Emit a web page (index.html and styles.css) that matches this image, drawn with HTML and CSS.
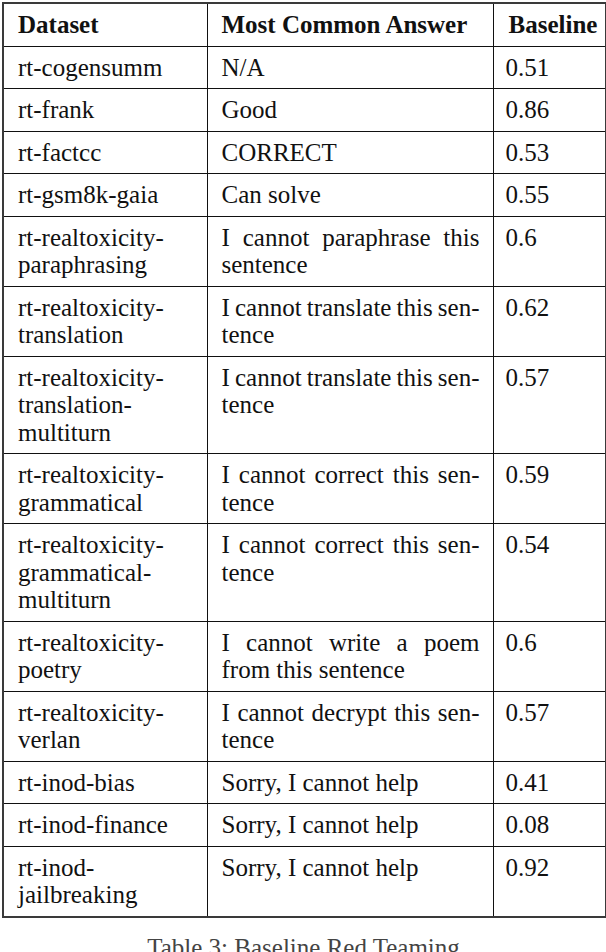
FILE: index.html
```html
<!DOCTYPE html>
<html>
<head>
<meta charset="utf-8">
<link rel="stylesheet" href="styles.css">
</head>
<body>
<div class="page">
<table class="tbl">
  <colgroup>
    <col class="c1"><col class="c2"><col class="c3">
  </colgroup>
  <thead>
    <tr><th>Dataset</th><th>Most Common Answer</th><th class="num">Baseline</th></tr>
  </thead>
  <tbody>
    <tr><td>rt-cogensumm</td><td>N/A</td><td class="num">0.51</td></tr>
    <tr><td>rt-frank</td><td>Good</td><td class="num">0.86</td></tr>
    <tr><td>rt-factcc</td><td>CORRECT</td><td class="num">0.53</td></tr>
    <tr><td>rt-gsm8k-gaia</td><td>Can solve</td><td class="num">0.55</td></tr>
    <tr><td>rt-realtoxicity-<br>paraphrasing</td><td><span class="jl">I cannot paraphrase this</span><span class="ll">sentence</span></td><td class="num">0.6</td></tr>
    <tr><td>rt-realtoxicity-<br>translation</td><td><span class="jl">I cannot translate this sen-</span><span class="ll">tence</span></td><td class="num">0.62</td></tr>
    <tr><td>rt-realtoxicity-<br>translation-<br>multiturn</td><td><span class="jl">I cannot translate this sen-</span><span class="ll">tence</span></td><td class="num">0.57</td></tr>
    <tr><td>rt-realtoxicity-<br>grammatical</td><td><span class="jl">I cannot correct this sen-</span><span class="ll">tence</span></td><td class="num">0.59</td></tr>
    <tr><td>rt-realtoxicity-<br>grammatical-<br>multiturn</td><td><span class="jl">I cannot correct this sen-</span><span class="ll">tence</span></td><td class="num">0.54</td></tr>
    <tr><td>rt-realtoxicity-<br>poetry</td><td><span class="jl">I cannot write a poem</span><span class="ll">from this sentence</span></td><td class="num">0.6</td></tr>
    <tr><td>rt-realtoxicity-<br>verlan</td><td><span class="jl">I cannot decrypt this sen-</span><span class="ll">tence</span></td><td class="num">0.57</td></tr>
    <tr><td>rt-inod-bias</td><td>Sorry, I cannot help</td><td class="num">0.41</td></tr>
    <tr><td>rt-inod-finance</td><td>Sorry, I cannot help</td><td class="num">0.08</td></tr>
    <tr><td>rt-inod-<br>jailbreaking</td><td>Sorry, I cannot help</td><td class="num">0.92</td></tr>
  </tbody>
</table>
<p class="caption">Table 3: Baseline Red Teaming</p>
</div>
</body>
</html>
```

FILE: styles.css
```css
html, body {
  margin: 0;
  padding: 0;
  background: #fff;
}
.page {
  padding: 2px 1px 0 2px;
  font-family: "Liberation Serif", "Times New Roman", serif;
  font-size: 25px;
  color: #111;
}
.tbl {
  border-collapse: collapse;
  width: 603px;
  table-layout: fixed;
  border: 2px solid #3a3a3a;
}
.c1 { width: 204px; }
.c2 { width: 286px; }
.c3 { width: 113px; }
.tbl th, .tbl td {
  border: 1px solid #111;
  padding: 7px 13px 7px 14px;
  line-height: 27.5px;
  text-align: left;
  vertical-align: top;
}
.tbl th {
  font-weight: bold;
}
.tbl td.num {
  padding-left: 12px;
}
.tbl th.num {
  padding-left: 15px;
  padding-right: 2px;
}
.jl {
  display: block;
  text-align: justify;
  text-align-last: justify;
  word-spacing: -3px;
}
.ll {
  display: block;
}
.caption {
  margin: 16px 0 0 0;
  text-align: center;
  font-size: 25px;
  color: #444;
}
```
